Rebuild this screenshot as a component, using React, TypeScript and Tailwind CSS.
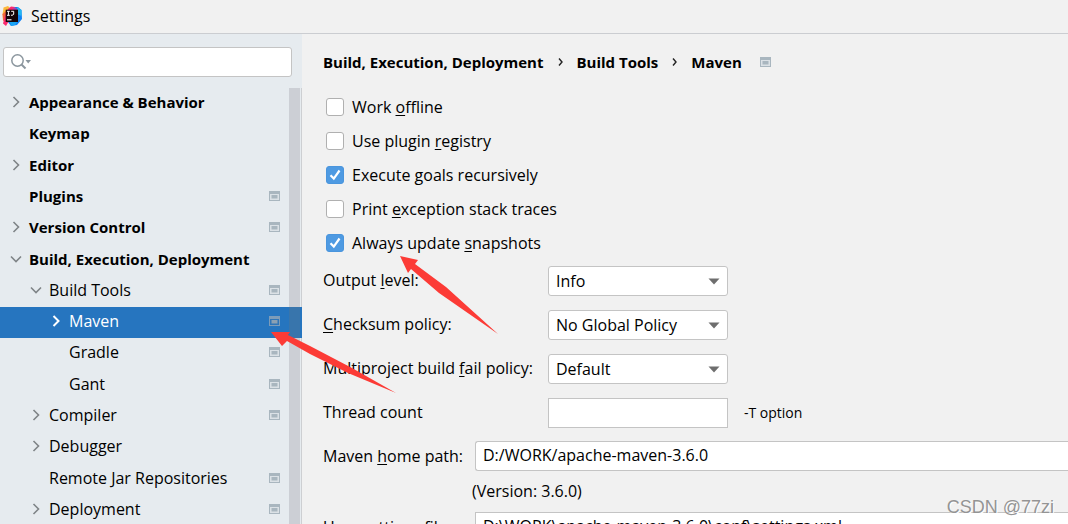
import type { ReactNode } from "react";

type TreeItem = {
  label: string;
  level: 0 | 1 | 2;
  state?: "open" | "closed";
  project?: boolean;
  selected?: boolean;
};

const TREE: TreeItem[] = [
  { label: "Appearance & Behavior", level: 0, state: "closed" },
  { label: "Keymap", level: 0 },
  { label: "Editor", level: 0, state: "closed" },
  { label: "Plugins", level: 0, project: true },
  { label: "Version Control", level: 0, state: "closed", project: true },
  { label: "Build, Execution, Deployment", level: 0, state: "open" },
  { label: "Build Tools", level: 1, state: "open", project: true },
  { label: "Maven", level: 2, state: "closed", project: true, selected: true },
  { label: "Gradle", level: 2, project: true },
  { label: "Gant", level: 2, project: true },
  { label: "Compiler", level: 1, state: "closed", project: true },
  { label: "Debugger", level: 1, state: "closed" },
  { label: "Remote Jar Repositories", level: 1, project: true },
  { label: "Deployment", level: 1, state: "closed", project: true },
];

const INDENT = ["pl-[9px] text-[15px] font-bold", "pl-[29px]", "pl-[49px]"];

const OPTIONS = [
  { id: "offline", text: "Work offline", key: 5, checked: false },
  { id: "registry", text: "Use plugin registry", key: 11, checked: false },
  { id: "recursive", text: "Execute goals recursively", key: 8, checked: true },
  { id: "traces", text: "Print exception stack traces", key: 6, checked: false },
  { id: "snapshots", text: "Always update snapshots", key: 14, checked: true },
];

const SELECTS = [
  { id: "output", text: "Output level:", key: 7, values: ["Info", "Debug", "Warn", "Error"] },
  { id: "checksum", text: "Checksum policy:", key: 0, values: ["No Global Policy", "Fail", "Warn"] },
  { id: "fail", text: "Multiproject build fail policy:", key: 19, values: ["Default", "Fail Fast", "Fail At End"] },
];

// Label with its keyboard mnemonic underlined
function Mnemonic({ text, at }: { text: string; at: number }) {
  return (
    <>
      {text.slice(0, at)}
      <span className="underline decoration-1 underline-offset-2">{text[at]}</span>
      {text.slice(at + 1)}
    </>
  );
}

function Logo() {
  return (
    <svg className="h-5 w-5" viewBox="0 0 20 20" aria-hidden="true">
      <path d="M1.5 1.5 6 0 10 4 5 12 0.5 9Z" fill="#fdb83c" />
      <path d="M0.5 8 4 5 7 12 1 15Z" fill="#f4673a" />
      <path d="M6 3 9 0.5 13 1 14 5 8 13 4 20 1 17.5 3 10Z" fill="#fb2a6e" />
      <path d="M13 1 16 1 19.5 4 20 13 15 19 9 20 6 16 13 9Z" fill="#0f82f5" />
      <path d="M15 1 19.5 4 19.5 10 15 8Z" fill="#22b7f2" />
      <path d="M8 16 16 15 13 19 9 20Z" fill="#19a5f5" />
      <path d="M12 1 15.5 3 14 8 10 5Z" fill="#b03fb0" />
      <path d="M3.7 3.7H16V16H3.7Z" fill="#140508" />
      <path d="M5 5.3H7.8M6.4 5.3V9.3M5 9.3H7.8M9.2 5.3H11.7V8.2Q11.7 9.3 9 9.3" fill="none" stroke="#fff" strokeWidth="1" />
      <path d="M5 13.8H9.5" stroke="#fff" strokeWidth="1.1" />
    </svg>
  );
}

function ProjectIcon({ selected = false }: { selected?: boolean }) {
  return (
    <svg className="h-[10px] w-[11px] shrink-0" viewBox="0 0 11 10" aria-hidden="true">
      <path d="M0 0H11V10H0Z" fill={selected ? "#7d9cb9" : "#a9b6bf"} />
      <path d="M1 3H10V9H1Z" fill={selected ? "#2f75b8" : "#dbe1e6"} />
      <path d="M2.5 4H8.5V7.5H2.5Z" fill={selected ? "#8ba0b3" : "#a9b6bf"} />
    </svg>
  );
}

function Arrow({ state, selected }: { state?: "open" | "closed"; selected?: boolean }) {
  return (
    <svg
      className="h-[14px] w-[14px] shrink-0"
      viewBox="0 0 14 14"
      fill="none"
      stroke={selected ? "#fff" : "#7f8487"}
      strokeWidth={selected ? 2 : 1.6}
      aria-hidden="true"
    >
      {state === "closed" && <path d="M4.5 2 9.5 7 4.5 12" />}
      {state === "open" && <path d="M2 4.5 7 9.5 12 4.5" />}
    </svg>
  );
}

function TreeRow({ item }: { item: TreeItem }) {
  return (
    <li className={item.selected ? "flex bg-[#2675bf] text-white" : "flex"}>
      <button
        type="button"
        className={`flex min-w-0 flex-1 items-center gap-[6px] pb-[3px] text-left ${INDENT[item.level]}`}
      >
        <Arrow state={item.state} selected={item.selected} />
        <span className="flex-1 whitespace-nowrap">{item.label}</span>
        {item.project && <ProjectIcon selected={item.selected} />}
      </button>
      <span className={item.selected ? "ml-[9px] w-[11px] bg-[#3875ac]" : "ml-[9px] w-[11px] bg-[#cccfd5]"} />
      <span className={item.selected ? "w-[2px]" : "w-[2px] border-r border-[#cdcfd2]"} />
    </li>
  );
}

function Sidebar() {
  return (
    <aside className="flex w-[302px] shrink-0 flex-col bg-[#e6ebef]">
      <div className="py-[13px] pr-[10px] pl-[3px]">
        <label className="flex h-[30px] items-center rounded-[3px] border border-[#c4c4c4] bg-white pl-[7px]">
          <svg className="h-[18px] w-[22px] shrink-0" viewBox="0 0 22 18" fill="none" aria-hidden="true">
            <circle cx="6.5" cy="7.5" r="5.7" stroke="#8b969e" strokeWidth="1.5" />
            <path d="M10.5 11.5 14.5 15.5" stroke="#8b969e" strokeWidth="2" />
            <path d="M14.5 7H20L17.2 10.5Z" fill="#8b969e" />
          </svg>
          <input type="text" aria-label="Search settings" className="min-w-0 flex-1 outline-none" />
        </label>
      </div>
      <ul className="mt-[-2px] grid min-h-[438px] auto-rows-fr">
        {TREE.map((item) => (
          <TreeRow key={item.label} item={item} />
        ))}
      </ul>
    </aside>
  );
}

function Separator() {
  return (
    <svg className="mx-[14px] h-[10px] w-[5px]" viewBox="0 0 5 10" fill="none" aria-hidden="true">
      <path d="M1 1.5 4 5 1 8.5" stroke="#222" strokeWidth="1.4" />
    </svg>
  );
}

function Breadcrumbs() {
  return (
    <nav aria-label="Breadcrumb" className="flex h-[56px] items-center text-[15px] font-bold whitespace-nowrap">
      <a href="#build">Build, Execution, Deployment</a>
      <Separator />
      <a href="#tools">Build Tools</a>
      <Separator />
      <a href="#maven" className="mr-[18px]">
        Maven
      </a>
      <ProjectIcon />
    </nav>
  );
}

function Checkbox({ id, checked, children }: { id: string; checked: boolean; children: ReactNode }) {
  return (
    <div className="flex h-[34px] items-center pb-px">
      <span className="grid">
        <input
          id={id}
          type="checkbox"
          defaultChecked={checked}
          className="peer col-start-1 row-start-1 h-[18px] w-[18px] appearance-none rounded-[3px] border border-[#b0b0b0] bg-white checked:border-[#4a95dd] checked:bg-[#4e9ae2]"
        />
        <svg
          className="pointer-events-none invisible col-start-1 row-start-1 h-[18px] w-[18px] peer-checked:visible"
          viewBox="0 0 18 18"
          fill="none"
          aria-hidden="true"
        >
          <path d="M4.5 9.2 7.8 12.6 13.5 4.5" stroke="#fff" strokeWidth="2.2" />
        </svg>
      </span>
      <label htmlFor={id} className="pl-2">
        {children}
      </label>
    </div>
  );
}

function Select({ id, values }: { id: string; values: string[] }) {
  return (
    <span className="grid w-[180px] items-center">
      <select
        id={id}
        className="col-start-1 row-start-1 h-[30px] appearance-none rounded-[3px] border border-[#c4c4c4] bg-white pl-[7px]"
      >
        {values.map((v) => (
          <option key={v}>{v}</option>
        ))}
      </select>
      <svg className="pointer-events-none col-start-1 row-start-1 mr-[8px] h-[7px] w-[12px] justify-self-end" viewBox="0 0 12 7" aria-hidden="true">
        <path d="M0.5 0.5H11.5L6 6.5Z" fill="#6e6e6e" />
      </svg>
    </span>
  );
}

function MavenForm() {
  return (
    <form>
      <div className="mb-[6px] pl-[3px]">
        {OPTIONS.map((o) => (
          <Checkbox key={o.id} id={o.id} checked={o.checked}>
            <Mnemonic text={o.text} at={o.key} />
          </Checkbox>
        ))}
      </div>
      <div className="grid grid-cols-[225px_1fr] items-center gap-y-[14px]">
        {SELECTS.map((s) => (
          <div key={s.id} className="contents">
            <label htmlFor={s.id} className="pb-[3px] whitespace-nowrap">
              <Mnemonic text={s.text} at={s.key} />
            </label>
            <Select id={s.id} values={s.values} />
          </div>
        ))}
        <label htmlFor="threads" className="pb-[3px]">
          Thread count
        </label>
        <div className="flex items-center gap-4">
          <input id="threads" type="text" className="h-[30px] w-[180px] border border-[#c4c4c4] bg-white px-[7px]" />
          <span className="text-sm">-T option</span>
        </div>
      </div>
      <div className="mt-[13px] grid grid-cols-[152px_1fr] items-center">
        <label htmlFor="home">
          <Mnemonic text="Maven home path:" at={6} />
        </label>
        <input
          id="home"
          type="text"
          defaultValue="D:/WORK/apache-maven-3.6.0"
          className="h-[30px] rounded-l-[3px] border border-r-0 border-[#c4c4c4] bg-white px-[7px] pb-[2px]"
        />
        <p className="col-start-2 ml-[-3px] h-[41px] leading-[41px]">(Version: 3.6.0)</p>
        <label htmlFor="settings">
          <Mnemonic text="User settings file:" at={5} />
        </label>
        <input
          id="settings"
          type="text"
          defaultValue="D:\WORK\apache-maven-3.6.0\conf\settings.xml"
          className="h-[30px] border border-r-0 border-[#c4c4c4] bg-white px-[7px] pb-[2px]"
        />
      </div>
    </form>
  );
}

// Hand-drawn pointers laid over the dialog
function Pointers() {
  return (
    <svg className="pointer-events-none absolute top-0 left-0 h-[524px] w-[1068px]" viewBox="0 0 1068 524" fill="#fc3b36" aria-hidden="true">
      <path d="M400 256 418 260 415 264 446 287 498 334 439 293 411 269 408 273Z" />
      <path d="M271 332 290 332 288 335 310 346 352 368 396 393 348 373 310 354 287 341 282 346Z" />
    </svg>
  );
}

export default function App() {
  return (
    <div className="relative flex h-screen flex-col overflow-hidden bg-[#f1f1f1] font-['Open_Sans','Noto_Sans',sans-serif] text-base leading-5 text-black">
      <header className="flex h-[34px] shrink-0 items-center gap-[9px] border-b border-[#cbcdd1] pb-[2px] pl-[2px]">
        <Logo />
        <h1>Settings</h1>
      </header>
      <div className="flex min-h-0 flex-1">
        <Sidebar />
        <main className="min-w-0 flex-1 pl-[21px]">
          <Breadcrumbs />
          <MavenForm />
        </main>
      </div>
      <Pointers />
      <span className="absolute right-[14px] bottom-[5px] font-['Liberation_Sans',sans-serif] text-lg leading-6 text-[#949494] [text-shadow:1px_1px_0_#ffffff]">
        CSDN @77zi
      </span>
    </div>
  );
}
